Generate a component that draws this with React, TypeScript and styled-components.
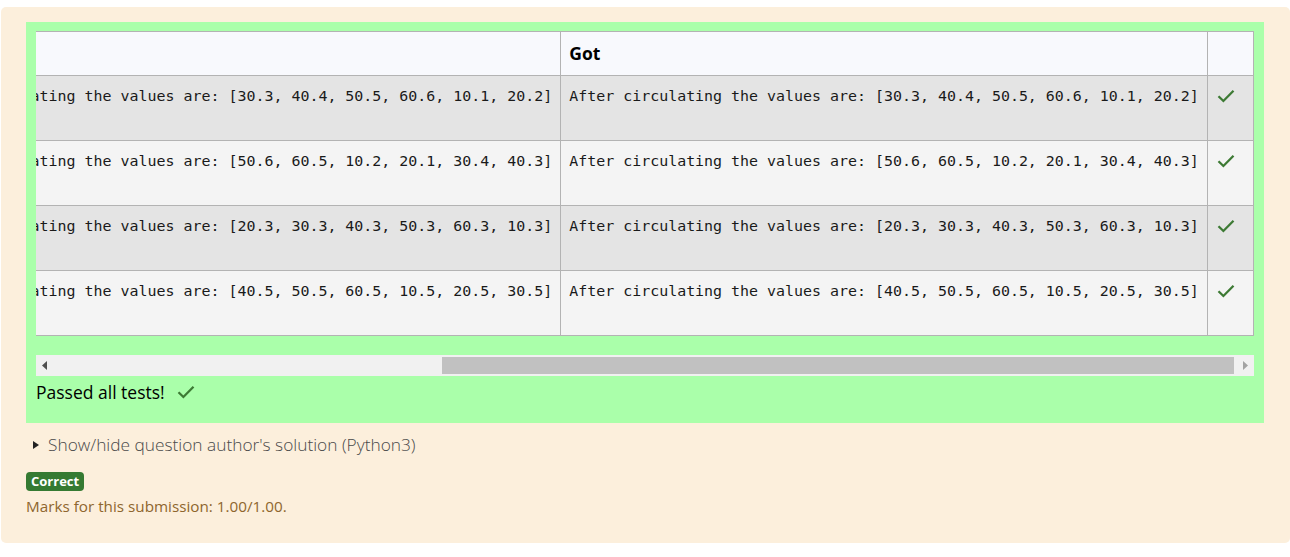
import React, { useEffect, useRef, useState } from "react";
import styled, { createGlobalStyle } from "styled-components";

const Global = createGlobalStyle`
  html, body { margin: 0; padding: 0; overflow: hidden; background: #ffffff; }
  body { font-family: "Open Sans", "Noto Sans", sans-serif; }
`;

const Outcome = styled.div`
  margin: 7px 0 0 1px;
  width: 1289px;
  box-sizing: border-box;
  background: #fcefdc;
  border-radius: 5px;
  padding: 15px 26px 26px 25px;
  color: #8e662e;
`;

const Feedback = styled.div`
  background: #aaffaa;
  padding: 9px 10px 19px 10px;
`;

const Scroller = styled.div`
  overflow: hidden;
  width: 100%;
`;

const Table = styled.table`
  border-collapse: collapse;
  width: max-content;
  margin-bottom: 19px;
  color: #000;
`;

const HeadCell = styled.th`
  background: #f8f9fd;
  border: 1px solid #b3b3b3;
  padding: 10px 8px;
  line-height: 23px;
  text-align: left;
  font-family: "Open Sans", sans-serif;
  font-size: 17.5px;
  font-weight: 700;
  white-space: nowrap;
`;

const Row = styled.tr<{ $odd: boolean }>`
  background: ${(p) => (p.$odd ? "#e4e4e4" : "#f4f4f4")};
`;

const Cell = styled.td`
  border: 1px solid #b3b3b3;
  padding: 9px 8px 10px 8px;
  vertical-align: top;
`;

const IconCell = styled.td`
  border: 1px solid #b3b3b3;
  padding: 10px 10px 10px 9px;
  vertical-align: top;
  width: 26px;
  min-width: 26px;
`;

const Pre = styled.pre`
  margin: 0;
  padding-bottom: 23px;
  font-family: "DejaVu Sans Mono", monospace;
  font-size: 14.95px;
  line-height: 22px;
  white-space: pre;
  color: #1a1a1a;
`;

const ScrollBar = styled.div`
  display: flex;
  height: 21px;
  background: #f1f1f1;
`;

const ArrowBox = styled.div`
  width: 17px;
  flex: none;
  display: flex;
  align-items: center;
  justify-content: center;
`;

const Track = styled.div`
  flex: 1;
  position: relative;
  margin-right: 3px;
`;

const Thumb = styled.div`
  position: absolute;
  top: 2px;
  bottom: 2px;
  background: #c1c1c1;
`;

const Passed = styled.div`
  display: flex;
  align-items: center;
  gap: 12px;
  margin-top: 4px;
  font-size: 17.5px;
  color: #000;
  line-height: 24px;
`;

const Details = styled.div`
  display: flex;
  align-items: center;
  gap: 9px;
  margin: 10px 0 0 7px;
  font-size: 17.3px;
  font-weight: 300;
  color: #4a4a4a;
  line-height: 24px;
`;

const Triangle = styled.span`
  width: 0;
  height: 0;
  border-top: 4px solid transparent;
  border-bottom: 4px solid transparent;
  border-left: 6px solid #222;
`;

const Badge = styled.span`
  display: inline-block;
  margin-top: 15px;
  background: #357a32;
  color: #fff;
  font-weight: 700;
  font-size: 13px;
  line-height: 19px;
  padding: 0 5px;
  border-radius: 4px;
`;

const Marks = styled.div`
  margin-top: 4px;
  font-size: 15.25px;
  line-height: 22px;
`;

const Check = ({ color = "#3d7a34" }: { color?: string }) => (
  <svg width="18" height="14" viewBox="0 0 18 14">
    <polyline points="1.5,7.2 6.4,12 16.5,1.8" fill="none" stroke={color} strokeWidth="2.3" />
  </svg>
);

const rows = [
  { t: "shift([10.1, 20.2, 30.3, 40.4, 50.5, 60.6], 2)", v: "[30.3, 40.4, 50.5, 60.6, 10.1, 20.2]" },
  { t: "shift([10.2, 20.1, 30.4, 40.3, 50.6, 60.5], 4)", v: "[50.6, 60.5, 10.2, 20.1, 30.4, 40.3]" },
  { t: "shift([10.3, 20.3, 30.3, 40.3, 50.3, 60.3], 1)", v: "[20.3, 30.3, 40.3, 50.3, 60.3, 10.3]" },
  { t: "shift([10.5, 20.5, 30.5, 40.5, 50.5, 60.5], 3)", v: "[40.5, 50.5, 60.5, 10.5, 20.5, 30.5]" },
];

export default function App() {
  const ref = useRef<HTMLDivElement>(null);
  const [bar, setBar] = useState({ left: 32.3, width: 67.4 });

  useEffect(() => {
    const el = ref.current;
    if (!el) return;
    el.scrollLeft = el.scrollWidth;
    const w = (el.clientWidth / el.scrollWidth) * 100;
    setBar({ left: (el.scrollLeft / el.scrollWidth) * 100, width: w });
  }, []);

  return (
    <>
      <Global />
      <Outcome>
        <Feedback>
          <Scroller ref={ref}>
            <Table>
              <thead>
                <tr>
                  <HeadCell></HeadCell>
                  <HeadCell>Test</HeadCell>
                  <HeadCell>Expected</HeadCell>
                  <HeadCell>Got</HeadCell>
                  <HeadCell></HeadCell>
                </tr>
              </thead>
              <tbody>
                {rows.map((r, i) => (
                  <Row key={i} $odd={i % 2 === 0}>
                    <IconCell />
                    <Cell>
                      <Pre>{r.t}</Pre>
                    </Cell>
                    <Cell>
                      <Pre>{"After circulating the values are: " + r.v}</Pre>
                    </Cell>
                    <Cell>
                      <Pre>{"After circulating the values are: " + r.v}</Pre>
                    </Cell>
                    <IconCell>
                      <Check />
                    </IconCell>
                  </Row>
                ))}
              </tbody>
            </Table>
          </Scroller>
          <ScrollBar>
            <ArrowBox>
              <svg width="5" height="9" viewBox="0 0 5 9">
                <polygon points="5,0 0,4.5 5,9" fill="#505050" />
              </svg>
            </ArrowBox>
            <Track>
              <Thumb style={{ left: `${bar.left}%`, width: `${bar.width}%` }} />
            </Track>
            <ArrowBox>
              <svg width="5" height="9" viewBox="0 0 5 9">
                <polygon points="0,0 5,4.5 0,9" fill="#a3a3a3" />
              </svg>
            </ArrowBox>
          </ScrollBar>
          <Passed>
            Passed all tests!
            <Check />
          </Passed>
        </Feedback>
        <Details>
          <Triangle />
          Show/hide question author's solution (Python3)
        </Details>
        <Badge>Correct</Badge>
        <Marks>Marks for this submission: 1.00/1.00.</Marks>
      </Outcome>
    </>
  );
}
